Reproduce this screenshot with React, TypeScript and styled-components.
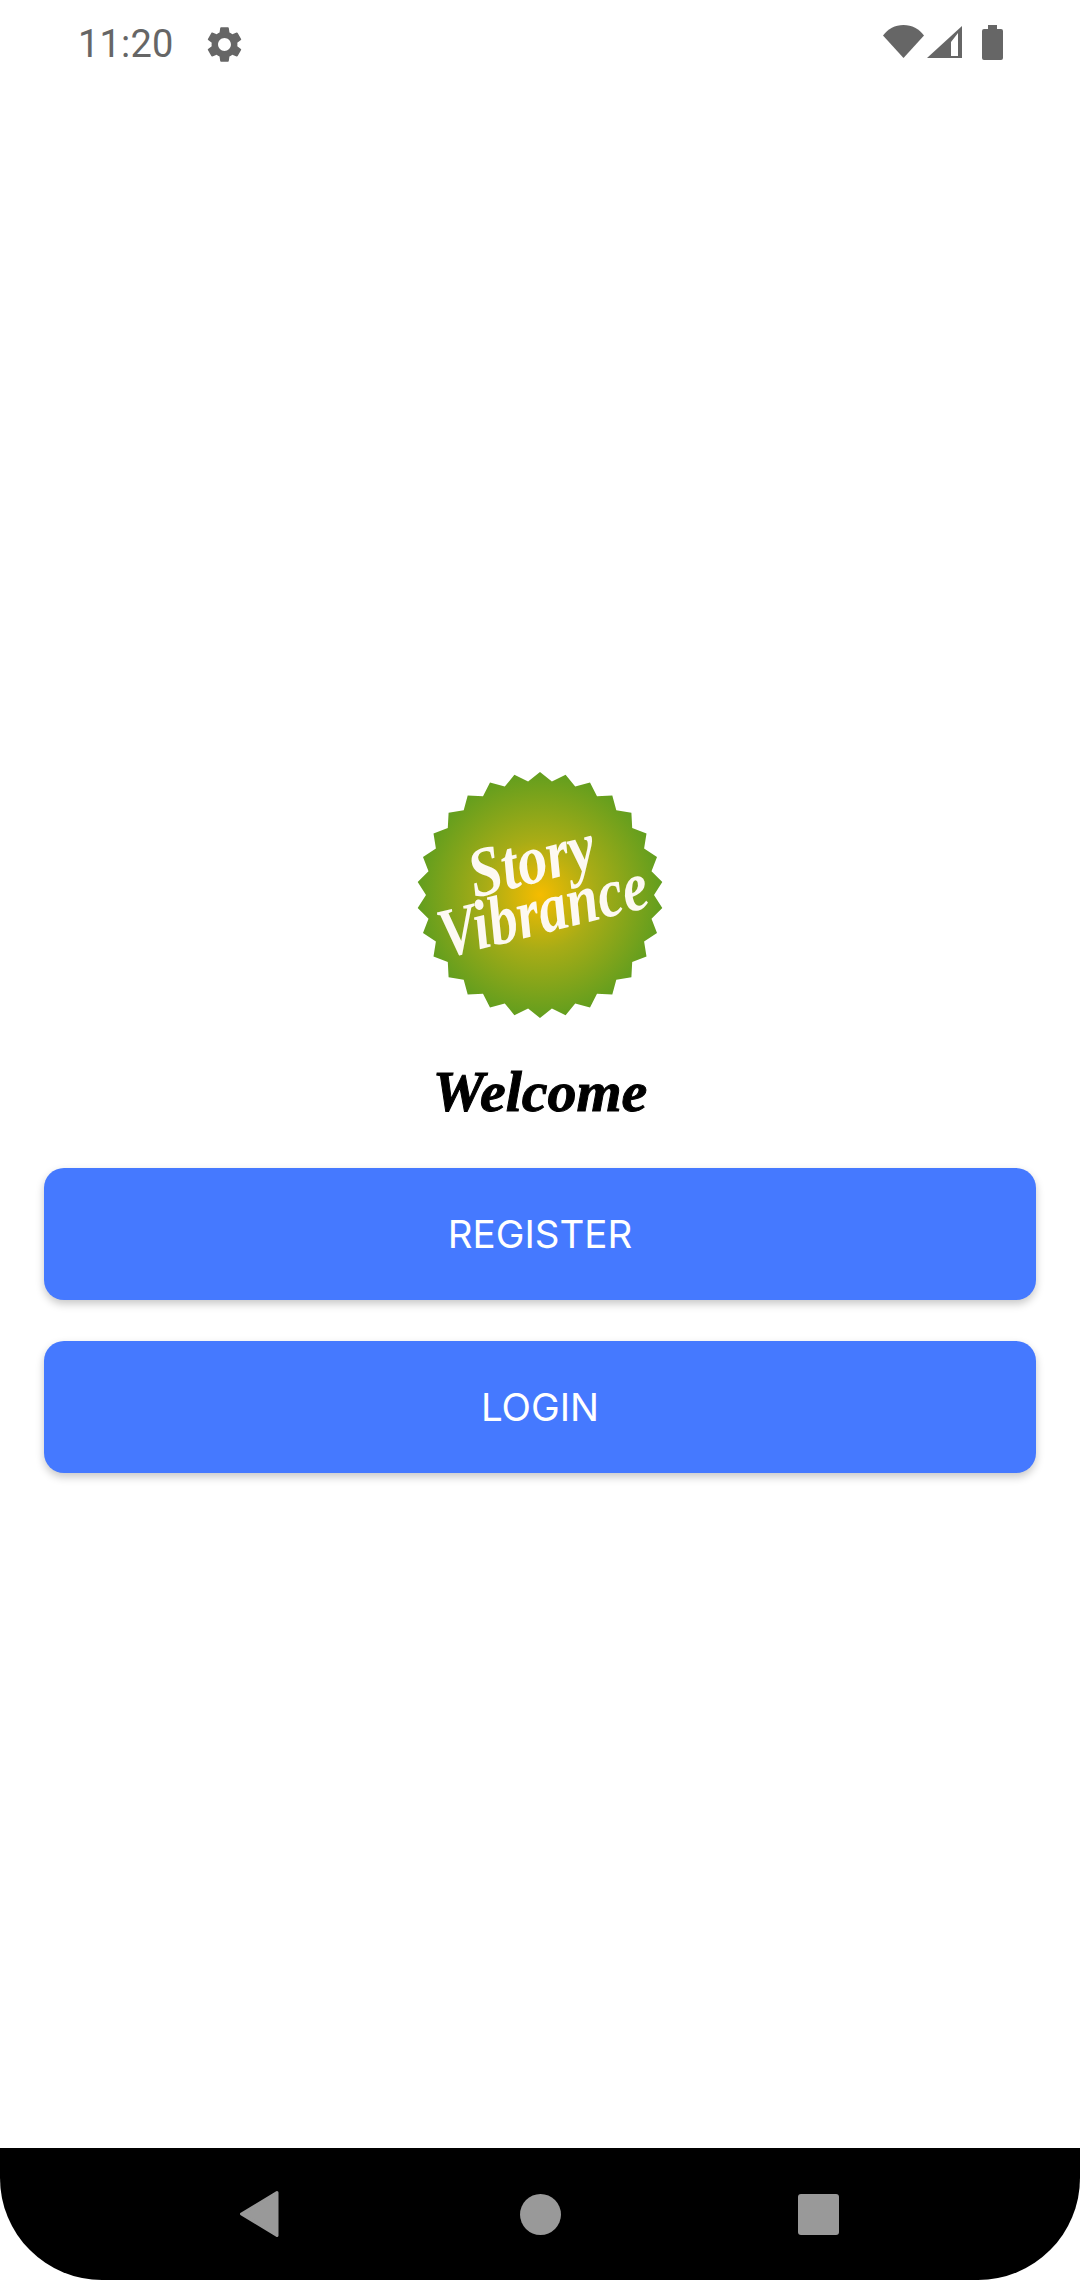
import React from 'react';
import styled, { createGlobalStyle } from 'styled-components';

const GlobalStyle = createGlobalStyle`
  html, body {
    margin: 0;
    padding: 0;
    background: #ffffff;
  }
`;

const Screen = styled.div`
  width: 1080px;
  height: 2280px;
  display: flex;
  flex-direction: column;
  overflow: hidden;
  background: #ffffff;
  font-family: Inter, "Liberation Sans", sans-serif;
`;

const StatusBar = styled.div`
  height: 97px;
  flex: none;
  box-sizing: border-box;
  padding: 20px 77px 0 78px;
  display: flex;
  align-items: flex-start;
  justify-content: space-between;
`;

const StatusLeft = styled.div`
  display: flex;
  align-items: center;
  gap: 29px;
  height: 48px;
`;

const StatusRight = styled.div`
  display: flex;
  align-items: flex-start;
  padding-top: 5px;
`;

const Clock = styled.span`
  font-family: Roboto, sans-serif;
  font-size: 38px;
  color: #666666;
  letter-spacing: 0.2px;
`;

const SignalIcon = styled.svg`
  margin: 1px 0 0 3px;
`;

const BatteryIcon = styled.svg`
  margin-left: 20px;
`;

const Main = styled.main`
  flex: 1;
  display: flex;
  flex-direction: column;
  align-items: center;
  justify-content: center;
  padding: 0 44px;
`;

const LogoWrap = styled.div`
  width: 246px;
  height: 246px;
`;

const LogoSvg = styled.svg`
  overflow: visible;
  display: block;
`;

const LogoWord = styled.text`
  font-family: "Liberation Serif", serif;
  font-weight: 700;
  font-style: italic;
  fill: #fdf9f2;
`;

const Welcome = styled.h1`
  margin: 43px 0 0;
  height: 62px;
  line-height: 62px;
  font-family: "Liberation Serif", serif;
  font-style: italic;
  font-weight: 700;
  font-size: 58px;
  color: #000000;
  -webkit-text-stroke: 1px #000000;
`;

const ButtonStack = styled.div`
  width: 100%;
  margin-top: 45px;
  display: flex;
  flex-direction: column;
  gap: 41px;
`;

const ActionButton = styled.button`
  width: 100%;
  height: 132px;
  border: none;
  border-radius: 20px;
  background: #4579ff;
  color: #ffffff;
  font-family: Inter, sans-serif;
  font-size: 38.5px;
  font-weight: 400;
  box-shadow: 0 4px 8px rgba(0, 0, 0, 0.22);
`;

const NavBar = styled.nav`
  height: 132px;
  flex: none;
  background: #000000;
  border-radius: 0 0 102px 102px;
  display: flex;
  align-items: center;
  justify-content: center;
`;

const NavSlot = styled.div`
  width: 278px;
  display: flex;
  justify-content: center;
`;

function burstPoints(teeth: number, outer: number, inner: number, cx: number, cy: number) {
  const pts: string[] = [];
  for (let i = 0; i < teeth * 2; i++) {
    const r = i % 2 === 0 ? outer : inner;
    const a = (Math.PI * i) / teeth - Math.PI / 2;
    pts.push(`${(cx + r * Math.cos(a)).toFixed(1)},${(cy + r * Math.sin(a)).toFixed(1)}`);
  }
  return pts.join(' ');
}

function Logo() {
  return (
    <LogoWrap>
      <LogoSvg width="246" height="246" viewBox="0 0 246 246">
        <defs>
          <radialGradient id="burst" cx="50%" cy="50%" r="50%">
            <stop offset="0%" stopColor="#f5bc00" />
            <stop offset="45%" stopColor="#a8ac16" />
            <stop offset="100%" stopColor="#629e1e" />
          </radialGradient>
        </defs>
        <polygon points={burstPoints(30, 123, 114, 123, 123)} fill="url(#burst)" />
        <g transform="rotate(-14 123 123)">
          <LogoWord x="123" y="110" fontSize="70" textAnchor="middle" textLength="128" lengthAdjust="spacingAndGlyphs">Story</LogoWord>
          <LogoWord x="122" y="161" fontSize="70" textAnchor="middle" textLength="214" lengthAdjust="spacingAndGlyphs">Vibrance</LogoWord>
        </g>
      </LogoSvg>
    </LogoWrap>
  );
}

export default function App() {
  return (
    <Screen>
      <GlobalStyle />
      <StatusBar>
        <StatusLeft>
          <Clock>11:20</Clock>
          <svg width="43" height="43" viewBox="0 0 24 24" fill="#666666">
            <path d="M19.14 12.94c.04-.3.06-.61.06-.94 0-.32-.02-.64-.07-.94l2.03-1.58a.49.49 0 0 0 .12-.61l-1.92-3.32a.488.488 0 0 0-.59-.22l-2.39.96c-.5-.38-1.03-.7-1.62-.94l-.36-2.54a.484.484 0 0 0-.48-.41h-3.84c-.24 0-.43.17-.47.41l-.36 2.54c-.59.24-1.13.57-1.62.94l-2.39-.96c-.22-.08-.47 0-.59.22L2.74 8.87c-.12.21-.08.47.12.61l2.03 1.58c-.05.3-.09.63-.09.94s.02.64.07.94l-2.03 1.58a.49.49 0 0 0-.12.61l1.92 3.32c.12.22.37.29.59.22l2.39-.96c.5.38 1.03.7 1.62.94l.36 2.54c.05.24.24.41.48.41h3.84c.24 0 .44-.17.47-.41l.36-2.54c.59-.24 1.13-.56 1.62-.94l2.39.96c.22.08.47 0 .59-.22l1.92-3.32c.12-.22.07-.47-.12-.61l-2.01-1.58zM12 15.6c-1.98 0-3.6-1.62-3.6-3.6s1.62-3.6 3.6-3.6 3.6 1.62 3.6 3.6-1.62 3.6-3.6 3.6z" />
          </svg>
        </StatusLeft>
        <StatusRight>
          <svg width="41" height="33" viewBox="0 0 41 33" fill="#666666">
            <path d="M20.5 33 0 10.500C5 4 12 0 20.500 0S36 4 41 10.500z" />
          </svg>
          <SignalIcon width="35" height="32" viewBox="0 0 35 32" fill="#666666">
            <path fillRule="evenodd" d="M35 0V32H0zM31 7 24 16V30H31z" />
          </SignalIcon>
          <BatteryIcon width="21" height="35" viewBox="0 0 21 35" fill="#666666">
            <path d="M6 0h9v4h4a2 2 0 0 1 2 2v27a2 2 0 0 1-2 2H2a2 2 0 0 1-2-2V6a2 2 0 0 1 2-2h4z" />
          </BatteryIcon>
        </StatusRight>
      </StatusBar>
      <Main>
        <Logo />
        <Welcome>Welcome</Welcome>
        <ButtonStack>
          <ActionButton>REGISTER</ActionButton>
          <ActionButton>LOGIN</ActionButton>
        </ButtonStack>
      </Main>
      <NavBar>
        <NavSlot>
          <svg width="45" height="46" viewBox="0 0 45 46" fill="#999999" stroke="#999999" strokeWidth="3" strokeLinejoin="round">
            <polygon points="37,1.500 1.500,23 37,44.500" />
          </svg>
        </NavSlot>
        <NavSlot>
          <svg width="41" height="41" viewBox="0 0 41 41" fill="#999999">
            <circle cx="20.500" cy="20.500" r="20.500" />
          </svg>
        </NavSlot>
        <NavSlot>
          <svg width="41" height="41" viewBox="0 0 41 41" fill="#999999">
            <rect width="41" height="41" rx="3" />
          </svg>
        </NavSlot>
      </NavBar>
    </Screen>
  );
}
